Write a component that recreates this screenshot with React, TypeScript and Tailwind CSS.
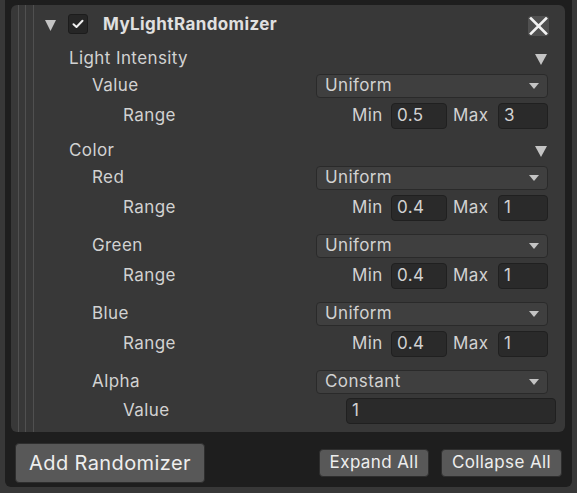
import React from 'react';

const Caret = () => (
  <svg width="12" height="12" viewBox="0 0 12 12">
    <polygon points="0,1 12,1 6,12" fill="#c4c4c4" />
  </svg>
);

const Dropdown = ({ value }: { value: string }) => (
  <div className="ml-auto mr-[17px] w-[232px] h-[24px] flex items-center justify-between pl-[8px] pr-[8px] bg-[#3f3f3f] border border-[#2a2a2a] rounded-[4px] text-[17px] tracking-[0.4px] text-[#d2d2d2]">
    <span>{value}</span>
    <svg width="10" height="6" viewBox="0 0 10 6">
      <polygon points="0,0 10,0 5,6" fill="#c4c4c4" />
    </svg>
  </div>
);

const Field = ({ value, w }: { value: string; w: string }) => (
  <div className={`${w} h-[26px] flex items-center pl-[5px] bg-[#2a2a2a] border border-[#202020] rounded-[4px] text-[17px] tracking-[0.4px] text-[#d2d2d2]`}>
    {value}
  </div>
);

const RangeRow = ({ min, max }: { min: string; max: string }) => (
  <div className="h-[26px] mt-[5px] flex items-center text-[17px] tracking-[0.4px] text-[#d2d2d2]">
    <span className="pl-[89px]">Range</span>
    <div className="ml-auto mr-[17px] flex items-center">
      <span className="w-[39px]">Min</span>
      <Field value={min} w="w-[56px]" />
      <span className="ml-[6px] w-[45px]">Max</span>
      <Field value={max} w="w-[50px]" />
    </div>
  </div>
);

const PickRow = ({ label, value, mt }: { label: string; value: string; mt: string }) => (
  <div className={`h-[24px] ${mt} flex items-center`}>
    <span className="pl-[58px] text-[17px] tracking-[0.4px] text-[#d2d2d2]">{label}</span>
    <Dropdown value={value} />
  </div>
);

const Section = ({ label, mt }: { label: string; mt: string }) => (
  <div className={`h-[24px] ${mt} flex items-center`}>
    <span className="pl-[35px] text-[17px] tracking-[0.4px] text-[#d2d2d2]">{label}</span>
    <span className="ml-auto mr-[18px] flex">
      <Caret />
    </span>
  </div>
);

export default function App() {
  return (
    <div className="w-[577px] h-[493px] bg-[#383838] pl-[5px] pr-[5px] pb-[6px] flex font-['Inter',sans-serif]">
      <div className="flex-1 bg-[#1e1e1e] rounded-b-[6px] pl-[6px] pr-[7px] pt-[5px] flex flex-col">
        <div className="h-[427px] bg-[#383838] rounded-[6px] flex">
          {/* nesting guides */}
          <div className="flex pl-[7px] gap-[6px]">
            <div className="w-px bg-[#505050]" />
            <div className="w-px bg-[#505050]" />
            <div className="w-px bg-[#505050] ml-[1px]" />
          </div>

          <div className="flex-1 flex flex-col pt-[8px]">
            <div className="h-[24px] flex items-center">
              <span className="ml-[11px] flex">
                <svg width="11" height="11" viewBox="0 0 11 11">
                  <polygon points="0,0 11,0 5.5,11" fill="#c4c4c4" />
                </svg>
              </span>
              <div className="ml-[12px] -mt-[2px] w-[20px] h-[20px] rounded-[3px] bg-[#262626] border border-[#1c1c1c] flex items-center justify-center">
                <svg width="12" height="10" viewBox="0 0 12 10">
                  <path d="M1.5 5.2 L4.5 8 L10.5 1.8" stroke="#f0f0f0" strokeWidth="2" fill="none" strokeLinecap="round" strokeLinejoin="round" />
                </svg>
              </div>
              <span className="ml-[15px] text-[17px] tracking-[0.4px] font-bold text-[#e0e0e0]">MyLightRandomizer</span>
              <div className="ml-auto mr-[16px] mt-[1px] w-[21px] h-[20px] rounded-[3px] bg-[#505050] flex items-center justify-center">
                <svg width="19" height="18" viewBox="0 0 19 18">
                  <path d="M2 1.5 L17 16.5 M17 1.5 L2 16.5" stroke="#f2f2f2" strokeWidth="2.6" strokeLinecap="square" />
                </svg>
              </div>
            </div>

            <Section label="Light Intensity" mt="mt-[10px]" />
            <PickRow label="Value" value="Uniform" mt="mt-[3px]" />
            <RangeRow min="0.5" max="3" />

            <Section label="Color" mt="mt-[10px]" />
            <PickRow label="Red" value="Uniform" mt="mt-[3px]" />
            <RangeRow min="0.4" max="1" />
            <PickRow label="Green" value="Uniform" mt="mt-[13px]" />
            <RangeRow min="0.4" max="1" />
            <PickRow label="Blue" value="Uniform" mt="mt-[13px]" />
            <RangeRow min="0.4" max="1" />
            <PickRow label="Alpha" value="Constant" mt="mt-[13px]" />
            <div className="h-[26px] mt-[4px] flex items-center">
              <span className="pl-[89px] text-[17px] tracking-[0.4px] text-[#d2d2d2]">Value</span>
              <div className="ml-auto mr-[9px]">
                <Field value="1" w="w-[210px]" />
              </div>
            </div>
          </div>
        </div>

        <div className="mt-[11px] flex items-center pl-[4px] pr-[3px] tracking-[0.4px]">
          <button className="h-[40px] w-[190px] rounded-[4px] bg-[#585858] border border-[#2e2e2e] text-[20px] text-[#eeeeee]">
            Add Randomizer
          </button>
          <button className="ml-auto h-[28px] w-[110px] rounded-[4px] bg-[#585858] border border-[#2e2e2e] text-[17px] text-[#eeeeee]">
            Expand All
          </button>
          <button className="ml-[12px] h-[28px] w-[121px] rounded-[4px] bg-[#585858] border border-[#2e2e2e] text-[17px] text-[#eeeeee]">
            Collapse All
          </button>
        </div>
      </div>
    </div>
  );
}
